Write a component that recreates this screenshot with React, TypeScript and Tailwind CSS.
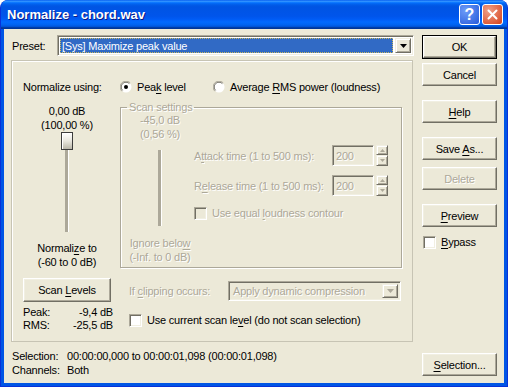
import React from "react";

const dis = "text-[#ACA899] [text-shadow:1px_1px_0_#fff]";

function U({ children }: { children: React.ReactNode }) {
  return <span className="underline underline-offset-[2px] decoration-1">{children}</span>;
}

function Btn({
  children,
  className = "",
  def = false,
  disabled = false,
}: {
  children: React.ReactNode;
  className?: string;
  def?: boolean;
  disabled?: boolean;
}) {
  return (
    <div className={(def ? "border border-black " : "") + className}>
      <div
        className={
          "h-full w-full flex items-center justify-center bg-[#ECE9D8] border border-t-white border-l-white border-r-[#716F64] border-b-[#716F64] shadow-[inset_-1px_-1px_0_#ACA899,inset_1px_1px_0_#F1EFE2] " +
          (disabled ? dis : "")
        }
      >
        {children}
      </div>
    </div>
  );
}

function Check({ disabled = false }: { disabled?: boolean }) {
  return (
    <div
      className={
        "w-[13px] h-[13px] shrink-0 border border-t-[#ACA899] border-l-[#ACA899] border-b-white border-r-white shadow-[inset_1px_1px_0_#716F64,inset_-1px_-1px_0_#F1EFE2] " +
        (disabled ? "bg-[#ECE9D8]" : "bg-white")
      }
    />
  );
}

function Radio({ on = false }: { on?: boolean }) {
  return (
    <svg width="12" height="12" viewBox="0 0 12 12" className="shrink-0">
      <circle cx="6" cy="6" r="5.5" fill="#fff" />
      <path d="M1.8 10.2 A5.6 5.6 0 0 1 10.2 1.8" stroke="#ACA899" strokeWidth="1" fill="none" />
      <path d="M2.6 9.4 A4.6 4.6 0 0 1 9.4 2.6" stroke="#716F64" strokeWidth="1" fill="none" />
      {on && <circle cx="6" cy="6" r="2" fill="#000" />}
    </svg>
  );
}

function Arrow({ color = "#000" }: { color?: string }) {
  return (
    <svg width="7" height="4" viewBox="0 0 7 4">
      <path d="M0 0 H7 L3.5 4 Z" fill={color} />
    </svg>
  );
}

function Raised({ children, className = "" }: { children?: React.ReactNode; className?: string }) {
  return (
    <div
      className={
        "flex items-center justify-center bg-[#ECE9D8] border border-t-[#F1EFE2] border-l-[#F1EFE2] border-r-[#716F64] border-b-[#716F64] shadow-[inset_1px_1px_0_#fff,inset_-1px_-1px_0_#ACA899] " +
        className
      }
    >
      {children}
    </div>
  );
}

function Sunken({ children, className = "" }: { children?: React.ReactNode; className?: string }) {
  return (
    <div
      className={
        "border border-t-[#ACA899] border-l-[#ACA899] border-b-white border-r-white shadow-[inset_1px_1px_0_#716F64,inset_-1px_-1px_0_#F1EFE2] " +
        className
      }
    >
      {children}
    </div>
  );
}

function Track({ h }: { h: string }) {
  return <div className={"w-[4px] bg-[#ACA899] border-r border-r-white " + h} />;
}

function SpinBox() {
  return (
    <div className="flex items-start gap-[2px]">
      <Sunken className="w-[42px] h-[21px] bg-[#ECE9D8] flex items-center pl-[3px]">
        <span className={dis}>200</span>
      </Sunken>
      <div className="flex flex-col">
        <Raised className="w-[12px] h-[10px]">
          <svg width="5" height="3" viewBox="0 0 5 3">
            <path d="M0 3 L2.5 0 L5 3 Z" fill="#ACA899" />
          </svg>
        </Raised>
        <Raised className="w-[12px] h-[11px]">
          <svg width="5" height="3" viewBox="0 0 5 3">
            <path d="M0 0 H5 L2.5 3 Z" fill="#ACA899" />
          </svg>
        </Raised>
      </div>
    </div>
  );
}

export default function App() {
  return (
    <div className="w-[508px] h-[387px] flex flex-col rounded-t-[8px] overflow-hidden bg-[#0055E5] border-x border-b border-[#0831D9] font-['Liberation_Sans',Arial,sans-serif] text-[11px] leading-[14px] text-black tracking-[-0.2px]">
      {/* Title bar */}
      <div className="h-[29px] shrink-0 flex items-center pl-[6px] pr-[4px] bg-[linear-gradient(to_bottom,#0058ee_0%,#3593ff_4%,#288eff_6%,#127dff_8%,#036ffc_10%,#0262ee_14%,#0057e5_20%,#0054e3_24%,#0055eb_56%,#005bf5_66%,#026afe_76%,#0062ef_86%,#0052d6_92%,#0040ab_94%,#003092_100%)]">
        <span className="flex-1 text-white font-bold text-[13px] tracking-normal [text-shadow:1px_1px_0_#0A1883]">
          Normalize - chord.wav
        </span>
        <div className="flex gap-[2px]">
          <div className="w-[21px] h-[21px] rounded-[3px] border border-white bg-[radial-gradient(circle_at_30%_30%,#6C9CF8,#2659DA)] flex items-center justify-center text-white font-bold text-[16px] tracking-normal">
            ?
          </div>
          <div className="w-[21px] h-[21px] rounded-[3px] border border-white bg-[radial-gradient(circle_at_30%_30%,#F0A088,#D6401A)] flex items-center justify-center">
            <svg width="11" height="11" viewBox="0 0 11 11">
              <path d="M1.5 1.5 L9.5 9.5 M9.5 1.5 L1.5 9.5" stroke="#fff" strokeWidth="2" strokeLinecap="round" />
            </svg>
          </div>
        </div>
      </div>

      {/* Client */}
      <div className="flex-1 mx-[3px] mb-[3px] bg-[#ECE9D8] flex">
        {/* Left column */}
        <div className="w-[403px] ml-[7px] flex flex-col">
          <div className="mt-[6px] h-[21px] flex items-center">
            <span className="w-[46px] pl-[1px]">Preset:</span>
            <Sunken className="w-[357px] h-[21px] bg-white flex items-center p-[2px]">
              <div className="flex-1 h-full bg-[#316AC5] text-white flex items-center pl-[2px] outline outline-1 outline-dotted outline-[#C8B860] -outline-offset-1 mr-[2px]">
                [Sys] Maximize peak value
              </div>
              <Raised className="w-[16px] h-full">
                <Arrow />
              </Raised>
            </Sunken>
          </div>

          {/* Main panel */}
          <div className="mt-[4px] w-[402px] h-[282px] border border-[#C7C4B4] shadow-[inset_1px_1px_0_#fff] flex flex-col">
            {/* Normalize using */}
            <div className="mt-[19px] ml-[11px] h-[14px] flex items-center">
              <span className="w-[97px]">Normalize using:</span>
              <div className="w-[93px] flex items-center gap-[5px]">
                <Radio on />
                <span>
                  Pea<U>k</U> level
                </span>
              </div>
              <div className="flex items-center gap-[5px]">
                <Radio />
                <span>
                  Average <U>R</U>MS power (loudness)
                </span>
              </div>
            </div>

            {/* Middle row */}
            <div className="mt-[6px] flex">
              <div className="ml-[11px] w-[88px] flex flex-col items-center pt-[4px] text-center">
                <span>0,00 dB</span>
                <span>(100,00 %)</span>
                <div className="relative flex flex-col items-center">
                  <div className="w-[12px] h-[18px] border border-[#3C3C3C] bg-[linear-gradient(to_bottom,#fff,#E8E6DD_50%,#B9B6A8)] shadow-[inset_1px_1px_0_#fff]" />
                  <Track h="h-[82px]" />
                </div>
                <span className="mt-[9px]">
                  Normali<U>z</U>e to
                </span>
                <span>(-60 to 0 dB)</span>
              </div>

              <fieldset className="ml-[9px] w-[282px] h-[168px] border border-[#ACA899] shadow-[1px_1px_0_#fff,inset_1px_1px_0_#fff] flex">
                <legend className={"ml-[6px] px-[2px] " + dis}>Scan settings</legend>
                <div className="flex w-full">
                  <div className={"w-[78px] flex flex-col items-center text-center -mt-[1px] " + dis}>
                    <span>-45,0 dB</span>
                    <span>(0,56 %)</span>
                    <div className="mt-[9px]">
                      <Track h="h-[76px]" />
                    </div>
                    <span className="mt-[10px]">
                      Ignore belo<U>w</U>
                    </span>
                    <span>(-Inf. to 0 dB)</span>
                  </div>
                  <div className="ml-[-5px] flex flex-col pt-[31px]">
                    <div className="flex items-center">
                      <span className={"w-[138px] " + dis}>
                        A<U>t</U>tack time (1 to 500 ms):
                      </span>
                      <SpinBox />
                    </div>
                    <div className="mt-[9px] flex items-center">
                      <span className={"w-[138px] " + dis}>
                        R<U>e</U>lease time (1 to 500 ms):
                      </span>
                      <SpinBox />
                    </div>
                    <div className="mt-[10px] flex items-center gap-[5px]">
                      <Check disabled />
                      <span className={dis}>
                        Use equal <U>l</U>oudness contour
                      </span>
                    </div>
                  </div>
                </div>
              </fieldset>
            </div>

            {/* Bottom row */}
            <div className="mt-[9px] flex">
              <div className="ml-[11px] w-[90px] flex flex-col">
                <Btn className="w-[88px] h-[24px]">
                  <span>
                    Scan <U>L</U>evels
                  </span>
                </Btn>
                <div className="mt-[4px] flex justify-between leading-[13px]">
                  <span>Peak:</span>
                  <span>-9,4 dB</span>
                </div>
                <div className="flex justify-between leading-[13px]">
                  <span>RMS:</span>
                  <span>-25,5 dB</span>
                </div>
              </div>
              <div className="ml-[16px] flex flex-col pt-[3px]">
                <div className="flex items-center">
                  <span className={"w-[99px] " + dis}>
                    If <U>c</U>lipping occurs:
                  </span>
                  <Sunken className="w-[173px] h-[20px] bg-[#ECE9D8] flex items-center p-[2px]">
                    <span className={"flex-1 pl-[2px] " + dis}>Apply dynamic compression</span>
                    <Raised className="w-[16px] h-full">
                      <Arrow color="#ACA899" />
                    </Raised>
                  </Sunken>
                </div>
                <div className="mt-[12px] flex items-center gap-[5px]">
                  <Check />
                  <span>
                    Use current scan le<U>v</U>el (do not scan selection)
                  </span>
                </div>
              </div>
            </div>
          </div>

          {/* Status */}
          <div className="mt-[7px] pl-[1px] flex flex-col">
            <div className="flex">
              <span className="w-[55px]">Selection:</span>
              <span>00:00:00,000 to 00:00:01,098 (00:00:01,098)</span>
            </div>
            <div className="flex">
              <span className="w-[55px]">Channels:</span>
              <span>Both</span>
            </div>
          </div>
        </div>

        {/* Right column */}
        <div className="ml-[8px] w-[75px] flex flex-col">
          <Btn def className="mt-[6px] w-[75px] h-[24px]">
            OK
          </Btn>
          <Btn className="mt-[4px] w-[75px] h-[23px]">Cancel</Btn>
          <Btn className="mt-[14px] w-[75px] h-[23px]">
            <span>
              <U>H</U>elp
            </span>
          </Btn>
          <Btn className="mt-[14px] w-[75px] h-[23px]">
            <span>
              Save <U>A</U>s...
            </span>
          </Btn>
          <Btn disabled className="mt-[7px] w-[75px] h-[23px]">
            Delete
          </Btn>
          <Btn className="mt-[14px] w-[75px] h-[23px]">
            <span>
              <U>P</U>review
            </span>
          </Btn>
          <div className="mt-[8px] flex items-center gap-[5px] pl-[1px]">
            <Check />
            <span>
              <U>B</U>ypass
            </span>
          </div>
          <Btn className="mt-auto mb-[7px] w-[75px] h-[23px]">
            <span>
              <U>S</U>election...
            </span>
          </Btn>
        </div>
      </div>
    </div>
  );
}
